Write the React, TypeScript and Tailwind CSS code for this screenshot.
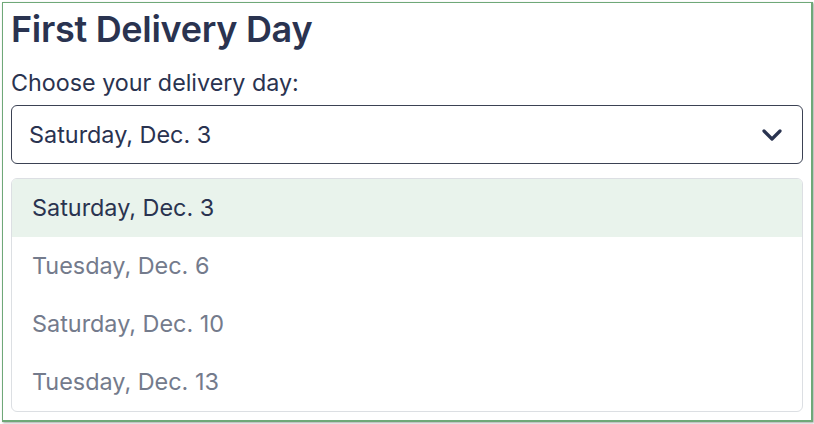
import React from "react";

const options = ["Saturday, Dec. 3", "Tuesday, Dec. 6", "Saturday, Dec. 10", "Tuesday, Dec. 13"];

export default function App() {
  return (
    <div className="w-[814px] h-[424px] bg-white" style={{ fontFamily: "Inter, 'Noto Sans', sans-serif" }}>
      <div className="ml-[2px] mt-[2px] w-[811px] h-[420px] border-l border-t border-r-2 border-b-2 border-[#6fa878] shadow-[1px_1px_2px_rgba(0,0,0,0.35)] px-2 pt-[6px] text-[#2a3350]">
        <h1 className="text-[36px] leading-[40px] font-semibold tracking-[-0.3px]">First Delivery Day</h1>
        <div className="mt-[20px] text-[23.3px] leading-[28px]">Choose your delivery day:</div>
        <div className="mt-2 h-[59px] rounded-[6px] border-[1.5px] border-[#3b4254] flex items-center justify-between pl-[17px] pr-[20px]">
          <span className="text-[23.4px]">Saturday, Dec. 3</span>
          <svg width="20" height="14" viewBox="0 0 20 14" fill="none">
            <path d="M2 3 L10 11 L18 3" stroke="#2a3350" strokeWidth="3.2" strokeLinecap="round" strokeLinejoin="round" />
          </svg>
        </div>
        <div className="mt-[14px] rounded-[6px] border border-[#dcdfe3] overflow-hidden">
          {options.map((o, i) => (
            <div
              key={o}
              className={
                i === 0
                  ? "h-[58px] flex items-center pl-5 text-[23.4px] bg-[#e9f3ec] text-[#2a3350]"
                  : "h-[58px] flex items-center pl-5 text-[23.4px] text-[#747b8c]"
              }
            >
              {o}
            </div>
          ))}
        </div>
      </div>
    </div>
  );
}
